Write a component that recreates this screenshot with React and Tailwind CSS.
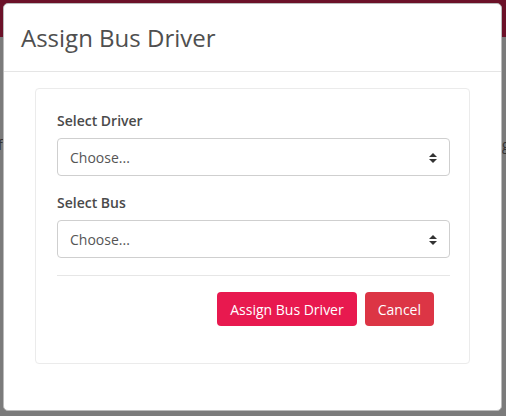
import React from 'react';

const SelectBox = ({ label, last }) => (
  <div className={last ? '' : 'mb-4'}>
    <label className="block text-[14px] leading-[21px] font-semibold text-[#4a4a4a] mb-[7px]">{label}</label>
    <div className="relative h-[38px] w-full rounded-[4px] border border-[#cfcfcf] bg-white flex items-center pl-3 pr-4">
      <span className="text-[14px] text-[#555]">Choose...</span>
      <svg className="absolute right-[12px] top-[14px]" width="8" height="10" viewBox="0 0 8 10">
        <path d="M4 0 L8 4 H0 Z" fill="#333" />
        <path d="M4 10 L8 6 H0 Z" fill="#333" />
      </svg>
    </div>
  </div>
);

export default function App() {
  return (
    <div className="relative w-[506px] h-[416px] bg-[#7b7b7b] overflow-hidden" style={{ fontFamily: '"Open Sans", "Noto Sans", sans-serif' }}>
      {/* page behind the dialog */}
      <div className="h-[37px] bg-[#6b1128]" />
      <div className="absolute left-[-2px] top-[134px] text-[14px] text-[#333]">f</div>
      <div className="absolute left-[502px] top-[134px] text-[14px] text-[#333]">g</div>

      {/* dialog */}
      <div className="absolute left-[3px] top-[3px] w-[499px] h-[408px] bg-white rounded-[5px] border border-[#bbb] flex flex-col">
        <div className="h-[68px] px-4 flex items-center border-b border-[#e5e5e5]">
          <h2 className="text-[24px] leading-[36px] text-[#4f4f4f] pl-[1px]">Assign Bus Driver</h2>
        </div>
        <div className="pt-4 px-[31px]">
          <div className="rounded-[4px] border border-[#ebebeb] pt-[21px] pl-[21px] pr-[19px] pb-[37px]">
            <SelectBox label="Select Driver" />
            <SelectBox label="Select Bus" last />
            <hr className="mt-[17px] mb-4 border-[#e6e6e6]" />
            <div className="flex justify-end gap-2 pr-[16px]">
              <button className="h-[34px] px-[13px] rounded-[4px] bg-[#e8194f] text-white text-[14px]">Assign Bus Driver</button>
              <button className="h-[34px] px-[13px] rounded-[4px] bg-[#dc3545] text-white text-[14px]">Cancel</button>
            </div>
          </div>
        </div>
      </div>
    </div>
  );
}
